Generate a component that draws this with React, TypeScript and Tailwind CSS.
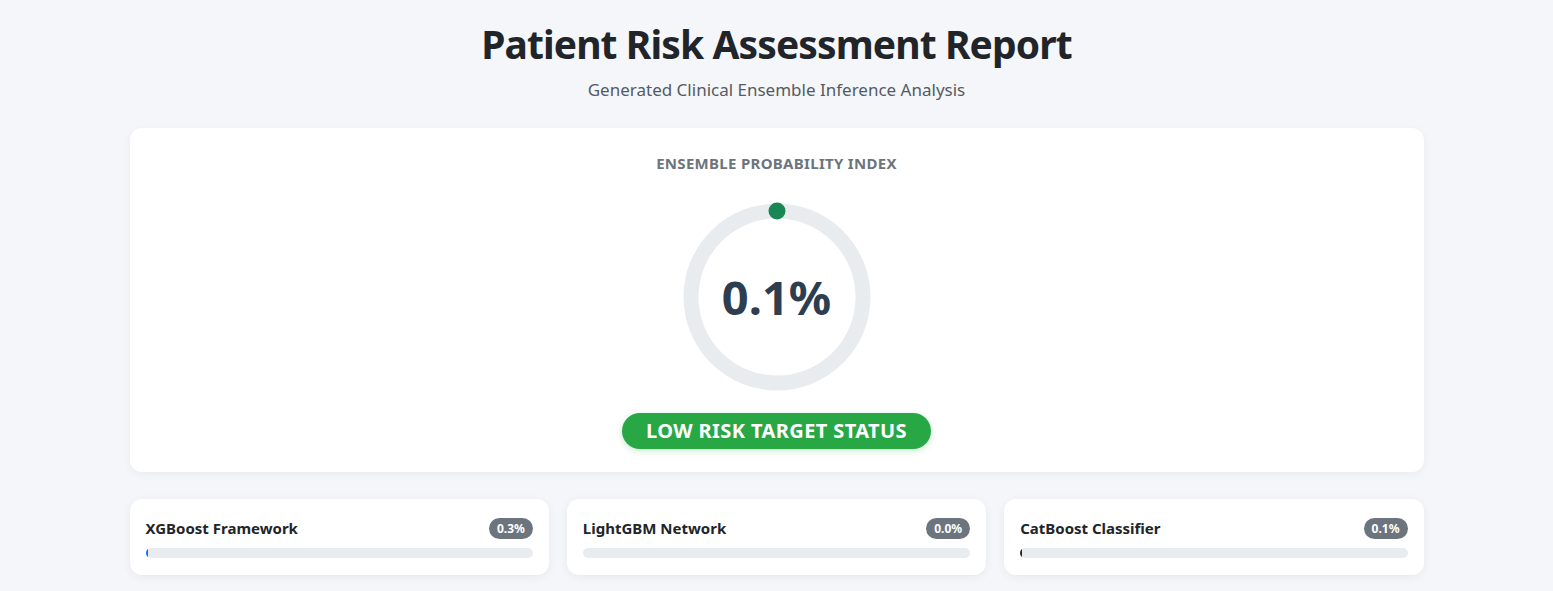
import React from "react";

const models = [
  { name: "XGBoost Framework", value: "0.3%", pct: 0.3, color: "bg-[#0d6efd]" },
  { name: "LightGBM Network", value: "0.0%", pct: 0, color: "bg-[#198754]" },
  { name: "CatBoost Classifier", value: "0.1%", pct: 0.1, color: "bg-[#212529]" },
];

export default function App() {
  const r = 86;
  const c = 2 * Math.PI * r;
  return (
    <div
      className="min-h-screen bg-[#f4f6f9] text-[#212529]"
      style={{ fontFamily: '"Noto Sans", "Open Sans", sans-serif' }}
    >
      <div className="mx-auto w-[1294px] pt-[18px] pb-[16px]">
        <div className="text-center">
          <h1 className="text-[39px] leading-[52px] font-bold tracking-[-0.9px] text-[#212529]">
            Patient Risk Assessment Report
          </h1>
          <p className="mt-[8px] text-[17px] leading-[24px] text-[#555b61]">
            Generated Clinical Ensemble Inference Analysis
          </p>
        </div>

        <div className="mt-[26px] flex flex-col items-center rounded-[12px] bg-white pt-[24px] pb-[23px] shadow-[0_2px_10px_rgba(0,0,0,0.05)]">
          <div className="text-[15px] leading-[22px] font-bold uppercase tracking-[0.3px] text-[#6c757d]">
            Ensemble Probability Index
          </div>
          <div className="relative mt-[28px] h-[190px] w-[190px]">
            <svg width="190" height="190" viewBox="0 0 190 190">
              <circle cx="95" cy="95" r={r} fill="none" stroke="#e9ecef" strokeWidth="15" />
              <circle
                cx="95"
                cy="95"
                r={r}
                fill="none"
                stroke="#198754"
                strokeWidth="15"
                strokeDasharray={`${c * 0.001} ${c}`}
                transform="rotate(-90 95 95)"
              />
              <circle cx="95" cy="9" r="8.5" fill="#198754" />
            </svg>
            <div className="absolute inset-0 flex items-center justify-center text-[47px] font-bold text-[#2c3e50]">
              0.1%
            </div>
          </div>
          <div className="mt-[21px] rounded-full bg-[#28a745] px-[24px] py-[5px] text-[20px] leading-[26px] font-bold uppercase tracking-[0.4px] text-white shadow-[0_2px_6px_rgba(40,167,69,0.25)]">
            Low Risk Target Status
          </div>
        </div>

        <div className="mt-[27px] grid grid-cols-3 gap-[18px]">
          {models.map((m) => (
            <div
              key={m.name}
              className="rounded-[12px] bg-white px-[16px] pt-[17px] pb-[17px] shadow-[0_2px_10px_rgba(0,0,0,0.06)]"
            >
              <div className="flex items-center justify-between">
                <span className="text-[15px] leading-[24px] font-bold text-[#212529]">{m.name}</span>
                <span className="rounded-full bg-[#6c757d] px-[8px] text-[12px] leading-[21px] font-bold text-white">
                  {m.value}
                </span>
              </div>
              <div className="mt-[8px] h-[10px] overflow-hidden rounded-full bg-[#e9ecef]">
                <div
                  className={`h-full rounded-full ${m.color}`}
                  style={{ width: m.pct > 0 ? "2px" : "0px" }}
                />
              </div>
            </div>
          ))}
        </div>
      </div>
    </div>
  );
}
